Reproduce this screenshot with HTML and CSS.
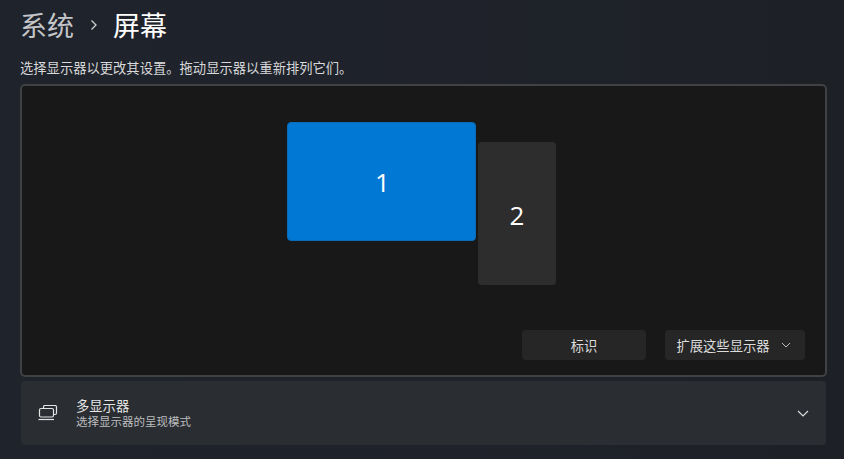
FILE: index.html
```html
<!DOCTYPE html>
<html lang="zh-CN">

<head>
    <meta charset="UTF-8">
    <title>屏幕</title>
    <link rel="stylesheet" href="styles.css">
</head>

<body>

    <h1 class="crumbs">
        <span class="crumb-parent">系统</span>
        <svg class="crumb-sep" width="8" height="12" viewBox="0 0 8 12"><path d="M1.5 1.5 L6 6 L1.5 10.5" /></svg>
        <span class="crumb-current">屏幕</span>
    </h1>

    <p class="hint">选择显示器以更改其设置。拖动显示器以重新排列它们。</p>

    <section class="arrange">
        <div class="canvas">
            <div class="monitor monitor-one">1</div>
            <div class="monitor monitor-two">2</div>
        </div>
        <div class="actions">
            <button class="btn btn-identify">标识</button>
            <button class="btn btn-mode">
                扩展这些显示器
                <svg width="10" height="6" viewBox="0 0 10 6"><path d="M1 1 L5 5 L9 1" /></svg>
            </button>
        </div>
    </section>

    <section class="card">
        <svg class="card-icon" width="20" height="16" viewBox="0 0 20 16">
            <path d="M5.5 3.5 V2 Q5.5 0.5 7 0.5 H17 Q18.5 0.5 18.5 2 V8 Q18.5 9.5 17 9.5 H15.5" />
            <rect x="1.5" y="3.5" width="14" height="8.5" rx="1.5" />
            <path d="M0.5 14.5 H16" />
        </svg>
        <div class="card-text">
            <div class="card-title">多显示器</div>
            <div class="card-sub">选择显示器的呈现模式</div>
        </div>
        <svg class="card-chevron" width="12" height="7" viewBox="0 0 12 7"><path d="M1 1 L6 6 L11 1" /></svg>
    </section>

</body>

</html>
```

FILE: styles.css
```css
html,
body {
    height: 100%;
}

body {
    margin: 0;
    padding: 0 17px 0 20px;
    overflow: hidden;
    font-family: "Noto Sans CJK SC", "Liberation Sans", sans-serif;
    background: linear-gradient(90deg, #1f232b 0%, #1f222a 55%, #1d2126 100%);
    color: #fff;
}

.crumbs {
    display: flex;
    align-items: center;
    height: 50px;
    margin: 0;
    font-size: 27px;
    font-weight: 400;
    line-height: 50px;
}

.crumb-parent {
    color: #c4c5c8;
}

.crumb-sep {
    margin: 0 15px 0 16px;
    fill: none;
    stroke: #d0d0d2;
    stroke-width: 1.3;
}

.hint {
    height: 34px;
    margin: 0;
    font-size: 13.3px;
    line-height: 36px;
    color: #d8d9da;
}

.arrange {
    box-sizing: border-box;
    height: 293px;
    padding: 0 20px 15px 0;
    background: #181818;
    border: 2px solid #3f4144;
    border-radius: 5px;
    display: flex;
    flex-direction: column;
}

.canvas {
    position: relative;
    flex: 1;
}

.monitor {
    position: absolute;
    display: flex;
    align-items: center;
    justify-content: center;
    box-sizing: border-box;
    border-radius: 4px;
    font-family: "Open Sans", "Liberation Sans", sans-serif;
    font-size: 26px;
}

.monitor-one {
    left: 265px;
    top: 36px;
    width: 189px;
    height: 119px;
    padding-left: 2px;
    background: #0078d4;
    border: 1px solid #0a6cb8;
}

.monitor-two {
    left: 456px;
    top: 56px;
    width: 78px;
    height: 143px;
    padding-top: 2px;
    background: #2d2d2d;
}

.actions {
    display: flex;
    justify-content: flex-end;
    gap: 19px;
}

.btn {
    display: flex;
    align-items: center;
    justify-content: center;
    height: 30px;
    padding: 0;
    background: #262626;
    border: none;
    border-radius: 4px;
    font-family: inherit;
    font-size: 13.3px;
    color: #dcdcdc;
}

.btn svg {
    margin-left: 11px;
    margin-right: 3px;
    fill: none;
    stroke: #bdbdbd;
    stroke-width: 1;
}

.btn-identify {
    width: 124px;
}

.btn-mode {
    width: 140px;
}

.card {
    display: flex;
    align-items: center;
    box-sizing: border-box;
    height: 64px;
    margin: 4px 1px 0;
    padding: 0 17px;
    background: #2a2d32;
    border-radius: 4px;
}

.card-icon {
    flex: none;
    margin-right: 18px;
    fill: none;
    stroke: #e4e4e4;
    stroke-width: 1.2;
}

.card-text {
    flex: 1;
}

.card-title {
    font-size: 13.3px;
    line-height: 17px;
    color: #e6e6e6;
}

.card-sub {
    font-size: 11.5px;
    line-height: 15px;
    color: #bcbdbf;
}

.card-chevron {
    fill: none;
    stroke: #dcdcdc;
    stroke-width: 1.2;
}
```
